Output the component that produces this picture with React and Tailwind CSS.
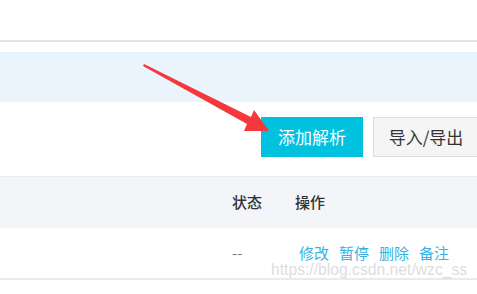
export default function App() {
    const links = ["修改", "暂停", "删除", "备注"];
    return (
        <div className="relative w-[477px] h-[294px] overflow-hidden bg-white font-['Noto_Sans_CJK_SC',sans-serif] text-[15px]">
            <div className="h-[42px] border-b-2 border-[#e2e2e2]" />
            <div className="h-[10px]" />
            <div className="h-[50px] bg-[#eaf4fd]" />

            <div className="flex justify-end gap-[10px] pt-[15px] pb-[19px] -mr-[2px]">
                <button className="w-[102px] h-[40px] bg-[#00c1de] text-white text-[17px]">添加解析</button>
                <button className="w-[106px] h-[40px] bg-[#f5f5f5] border border-[#dddddd] text-[#333] text-[17px]">
                    导入/导出
                </button>
            </div>

            <div className="flex h-[52px] items-center bg-[#f3f5f8] border-t border-[#e9ecf0] font-medium text-[#333]">
                <div className="flex-1" />
                <div className="w-[63px]">状态</div>
                <div className="w-[182px]">操作</div>
            </div>

            <div className="flex h-[52px] items-center border-b-2 border-[#e8eaee] text-[#777]">
                <div className="flex-1" />
                <div className="w-[63px]">--</div>
                <div className="w-[182px] flex gap-[10px] pl-[4px] text-[#38b2e2]">
                    {links.map((label) => (
                        <span key={label}>{label}</span>
                    ))}
                </div>
            </div>

            <svg className="absolute left-0 top-0" width="477" height="294" aria-hidden="true">
                <polygon
                    points="144,64 251,117 254,110 269,131 244,131 247,124 143,66"
                    fill="#f4383b"
                />
            </svg>

            <span className="absolute left-[271px] top-[262px] font-['Liberation_Sans',sans-serif] text-[15.7px] leading-none text-[#d4d4d4]/80">
                https://blog.csdn.net/wzc_ss
            </span>
        </div>
    );
}
